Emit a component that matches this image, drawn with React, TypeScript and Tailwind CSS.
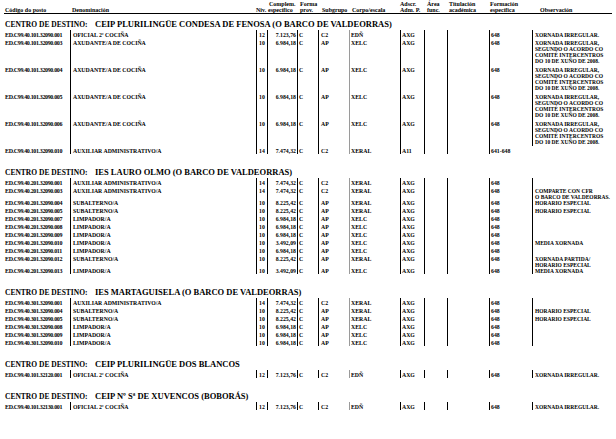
import React from 'react';

type Row = {
  code: string;
  name: string;
  niv: string;
  complem: string;
  sub: string;
  corpo: string;
  adscr: string;
  formac: string;
  obs: string[];
  noObsLine?: boolean;
};

type Section = { centro: string; rows: Row[] };

const IRREG = ['XORNADA IRREGULAR,', 'SEGUNDO O ACORDO CO', 'COMITÉ INTERCENTROS', 'DO 10 DE XUÑO DE 2008.'];

const axud = (n: string): Row => ({
  code: `ED.C99.40.101.32090.${n}`,
  name: 'AXUDANTE/A DE COCIÑA',
  niv: '10',
  complem: '6.984,18',
  sub: 'AP',
  corpo: 'XELC',
  adscr: 'AXG',
  formac: '648',
  obs: IRREG,
});

const aux = (code: string, obs: string[] = []): Row => ({
  code,
  name: 'AUXILIAR ADMINISTRATIVO/A',
  niv: '14',
  complem: '7.474,32',
  sub: 'C2',
  corpo: 'XERAL',
  adscr: 'AXG',
  formac: '648',
  obs,
});

const subal = (code: string, obs: string[] = ['HORARIO ESPECIAL']): Row => ({
  code,
  name: 'SUBALTERNO/A',
  niv: '10',
  complem: '8.225,42',
  sub: 'AP',
  corpo: 'XERAL',
  adscr: 'AXG',
  formac: '648',
  obs,
});

const limp = (code: string, half = false): Row => ({
  code,
  name: 'LIMPADOR/A',
  niv: '10',
  complem: half ? '3.492,09' : '6.984,18',
  sub: 'AP',
  corpo: 'XELC',
  adscr: 'AXG',
  formac: '648',
  obs: half ? ['MEDIA XORNADA'] : [],
});

const oficial = (code: string): Row => ({
  code,
  name: 'OFICIAL 2ª COCIÑA',
  niv: '12',
  complem: '7.123,76',
  sub: 'C2',
  corpo: 'EDÑ',
  adscr: 'AXG',
  formac: '648',
  obs: ['XORNADA IRREGULAR.'],
});

const SECTIONS: Section[] = [
  {
    centro: 'CEIP PLURILINGÜE CONDESA DE FENOSA (O BARCO DE VALDEORRAS)',
    rows: [
      oficial('ED.C99.40.101.32090.001'),
      axud('003'),
      axud('004'),
      axud('005'),
      axud('006'),
      { ...aux('ED.C99.40.101.32090.010'), adscr: 'A11', formac: '641-648', noObsLine: true },
    ],
  },
  {
    centro: 'IES LAURO OLMO (O BARCO DE VALDEORRAS)',
    rows: [
      aux('ED.C99.40.201.32090.001'),
      aux('ED.C99.40.201.32090.003', ['COMPARTE CON CFR', 'O BARCO DE VALDEORRAS.']),
      subal('ED.C99.40.201.32090.004'),
      subal('ED.C99.40.201.32090.005'),
      limp('ED.C99.40.201.32090.007'),
      limp('ED.C99.40.201.32090.008'),
      limp('ED.C99.40.201.32090.009'),
      limp('ED.C99.40.201.32090.010', true),
      limp('ED.C99.40.201.32090.011'),
      subal('ED.C99.40.201.32090.012', ['XORNADA PARTIDA/', 'HORARIO ESPECIAL']),
      limp('ED.C99.40.201.32090.013', true),
    ],
  },
  {
    centro: 'IES MARTAGUISELA (O BARCO DE VALDEORRAS)',
    rows: [
      aux('ED.C99.40.301.32090.001'),
      subal('ED.C99.40.301.32090.004'),
      subal('ED.C99.40.301.32090.005'),
      limp('ED.C99.40.301.32090.008'),
      limp('ED.C99.40.301.32090.009'),
      limp('ED.C99.40.301.32090.010'),
    ],
  },
  {
    centro: 'CEIP PLURILINGÜE DOS BLANCOS',
    rows: [oficial('ED.C99.40.101.32120.001')],
  },
  {
    centro: 'CEIP Nº Sª DE XUVENCOS (BOBORÁS)',
    rows: [oficial('ED.C99.40.101.32130.001')],
  },
];

const HEIGHTS: Record<number, string> = {
  0: 'h-[8px]',
  1: 'h-[8px]',
  2: 'h-[12px]',
  4: 'h-[27px]',
};

function DataRow({ row }: { row: Row }) {
  return (
    <div className={`flex ${HEIGHTS[row.obs.length]} text-[5.8px] leading-[6px] font-bold`}>
      <div className="w-[70px] shrink-0 overflow-hidden pl-[5px] pt-[1.5px] text-[6px] tracking-[-0.35px] whitespace-nowrap">
        {row.code}
      </div>
      <div className="w-[186px] shrink-0 border-l-[1.5px] border-black pl-[2px] pt-[1.5px] whitespace-nowrap">{row.name}</div>
      <div className="w-[11px] shrink-0 border-l border-black pt-[1.5px] text-center">{row.niv}</div>
      <div className="w-[30px] shrink-0 border-l border-black pr-[1px] pt-[1.5px] text-right">{row.complem}</div>
      <div className="w-[21px] shrink-0 border-l border-black pl-[1px] pt-[1.5px]">C</div>
      <div className="w-[31px] shrink-0 border-l border-black pl-[2px] pt-[1.5px]">{row.sub}</div>
      <div className="w-[51px] shrink-0 border-l-[1.5px] border-[#9a9a9a] pl-[1px] pt-[1.5px]">{row.corpo}</div>
      <div className="w-[24px] shrink-0 border-l border-black pl-[1px] pt-[1.5px]">{row.adscr}</div>
      <div className="w-[23px] shrink-0 border-l border-black" />
      <div className="w-[42px] shrink-0 border-l border-black" />
      <div className="w-[43px] shrink-0 border-l border-black pl-[1px] pt-[1.5px] whitespace-nowrap">{row.formac}</div>
      <div
        className={`flex-1 border-l-[1.5px] pl-[2px] pt-[1.5px] text-[5.5px] whitespace-nowrap ${
          row.noObsLine ? 'border-transparent' : 'border-black'
        }`}
      >
        {row.obs.map((l) => (
          <div key={l}>{l}</div>
        ))}
      </div>
    </div>
  );
}

export default function App() {
  return (
    <div
      className="w-[616px] h-[439px] overflow-hidden bg-white text-black"
      style={{ fontFamily: '"Liberation Serif", "Times New Roman", serif' }}
    >
      {/* Header */}
      <div className="mx-[4px] flex h-[14px] border-b border-black text-[6px] leading-[6px] font-bold whitespace-nowrap">
        <div className="w-[66px] shrink-0 pl-[1px] pt-[7px]">Código do posto</div>
        <div className="w-[186px] shrink-0 pl-[2px] pt-[7px]">Denominación</div>
        <div className="w-[11px] shrink-0 pt-[7px]">Niv.</div>
        <div className="w-[30px] shrink-0 pt-[1px] pl-[2px]">
          <div>Complem.</div>
          <div className="-ml-[1px]">específico</div>
        </div>
        <div className="w-[21px] shrink-0 pt-[1px] pl-[3px]">
          <div>Forma</div>
          <div>prov.</div>
        </div>
        <div className="w-[31px] shrink-0 pl-[4px] pt-[7px]">Subgrupo</div>
        <div className="w-[51px] shrink-0 pl-[3px] pt-[7px]">Corpo/escala</div>
        <div className="w-[24px] shrink-0 pt-[1px]">
          <div>Adscr.</div>
          <div>Adm. P.</div>
        </div>
        <div className="w-[23px] shrink-0 pl-[3px] pt-[1px]">
          <div>Área</div>
          <div>func.</div>
        </div>
        <div className="w-[42px] shrink-0 pl-[2px] pt-[1px]">
          <div>Titulación</div>
          <div>académica</div>
        </div>
        <div className="w-[43px] shrink-0 pl-[1px] pt-[1px]">
          <div>Formación</div>
          <div>específica</div>
        </div>
        <div className="flex-1 pl-[8px] pt-[7px]">Observación</div>
      </div>

      {SECTIONS.map((s, i) => (
        <div key={s.centro} className={i === 0 ? 'mt-[5px]' : 'mt-[13px]'}>
          <div className="flex h-[11px] items-center pl-[5px] font-bold whitespace-nowrap">
            <span className="w-[90px] shrink-0 text-[7.5px]">CENTRO DE DESTINO:</span>
            <span className="text-[8.5px]">{s.centro}</span>
          </div>
          {s.rows.map((r) => (
            <DataRow key={r.code} row={r} />
          ))}
        </div>
      ))}
    </div>
  );
}
